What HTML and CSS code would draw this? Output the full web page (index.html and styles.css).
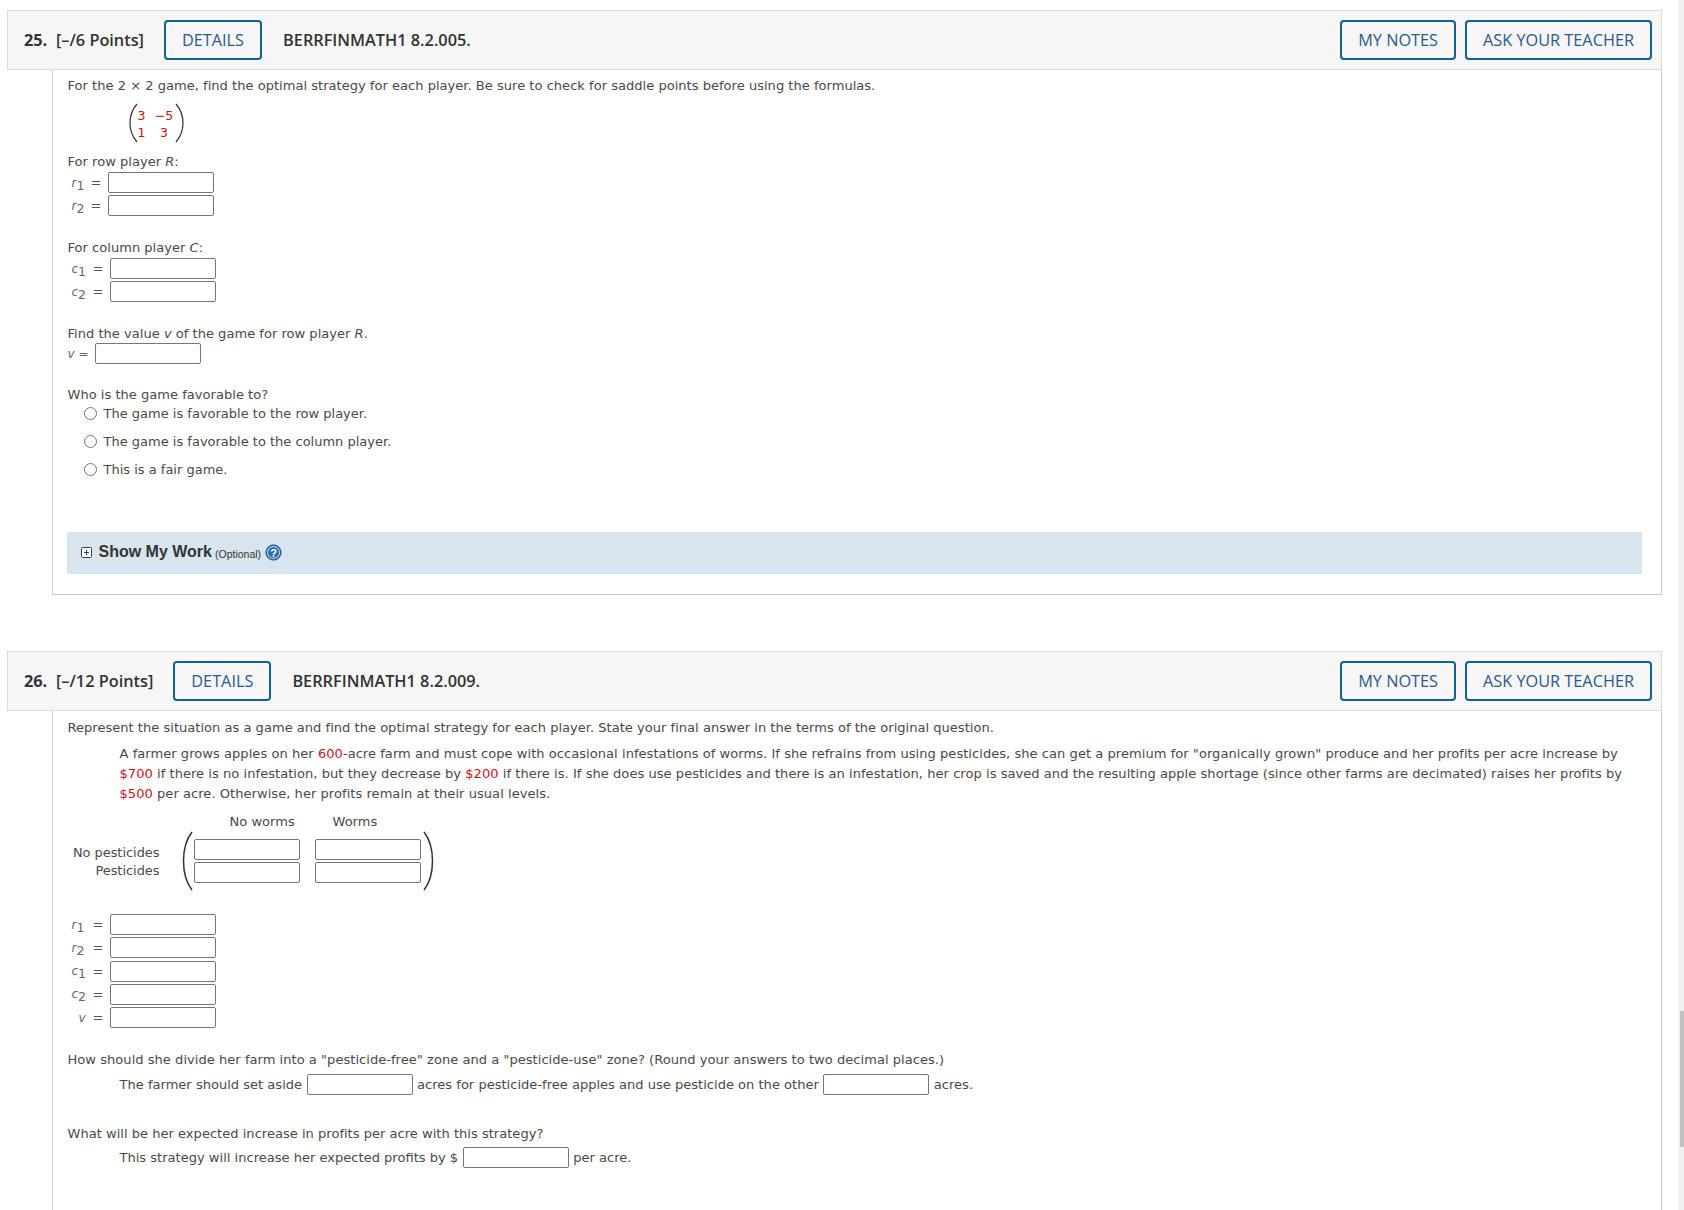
FILE: index.html
```html
<!DOCTYPE html>
<html>
	<head>
		<meta charset="UTF-8">
		<title>Questions 25 and 26</title>
		<link rel="stylesheet" href="styles.css">
	</head>
	<body>
		<!--question 25-->
		<div class="question">
			<div class="qhead">
				<b class="qnum">25.</b>
				<span class="points">[–/6 Points]</span>
				<a class="btn btn-details">DETAILS</a>
				<span class="code">BERRFINMATH1 8.2.005.</span>
				<div class="qtools">
					<a class="btn">MY NOTES</a>
					<a class="btn">ASK YOUR TEACHER</a>
				</div>
			</div>
			<div class="qbody">
				<p class="line first">For the 2 × 2 game, find the optimal strategy for each player. Be sure to check for saddle points before using the formulas.</p>
				<div class="small-matrix">
					<svg class="paren" width="9" height="40" viewBox="0 0 9 40"><path d="M8 1C2 8 1 14 1 20s1 12 7 19" fill="none" stroke="#333" stroke-width="1.2"/></svg>
					<div class="nums">
						<span>3</span><span>−5</span>
						<span>1</span><span>3</span>
					</div>
					<svg class="paren" width="9" height="40" viewBox="0 0 9 40"><path d="M1 1c6 7 7 13 7 19s-1 12-7 19" fill="none" stroke="#333" stroke-width="1.2"/></svg>
				</div>
				<p class="line gap-s">For row player <i>R</i>:</p>
				<div class="answers">
					<label class="ans lbl-r"><span class="var"><i>r</i><sub>1</sub></span><span class="eq">=</span><input type="text"></label>
					<label class="ans lbl-r"><span class="var"><i>r</i><sub>2</sub></span><span class="eq">=</span><input type="text"></label>
				</div>
				<p class="line gap-l">For column player <i>C</i>:</p>
				<div class="answers">
					<label class="ans lbl-c"><span class="var"><i>c</i><sub>1</sub></span><span class="eq">=</span><input type="text"></label>
					<label class="ans lbl-c"><span class="var"><i>c</i><sub>2</sub></span><span class="eq">=</span><input type="text"></label>
				</div>
				<p class="line gap-l">Find the value <i>v</i> of the game for row player <i>R</i>.</p>
				<label class="ans-v"><span class="var"><i>v</i> =</span><input type="text"></label>
				<p class="line gap-who">Who is the game favorable to?</p>
				<div class="choices">
					<label class="choice"><input type="radio" name="fav">The game is favorable to the row player.</label>
					<label class="choice"><input type="radio" name="fav">The game is favorable to the column player.</label>
					<label class="choice"><input type="radio" name="fav">This is a fair game.</label>
				</div>
				<div class="mywork">
					<svg class="plus" width="11" height="11" viewBox="0 0 11 11"><rect x=".5" y=".5" width="10" height="10" rx="1" fill="#fff" stroke="#345"/><path d="M5.500 3v5M3 5.500h5" stroke="#345"/></svg>
					<b>Show My Work</b>
					<small>(Optional)</small>
					<svg class="help" width="17" height="17" viewBox="0 0 17 17"><circle cx="8.500" cy="8.500" r="7.600" fill="#2f6db5" stroke="#1d4f8f"/><circle cx="8.500" cy="8.500" r="6" fill="#2f6db5" stroke="#fff" stroke-width=".8"/><text x="8.500" y="12.500" text-anchor="middle" class="help-mark">?</text></svg>
				</div>
			</div>
		</div>

		<!--question 26-->
		<div class="question question-last">
			<div class="qhead">
				<b class="qnum">26.</b>
				<span class="points">[–/12 Points]</span>
				<a class="btn btn-details">DETAILS</a>
				<span class="code">BERRFINMATH1 8.2.009.</span>
				<div class="qtools">
					<a class="btn">MY NOTES</a>
					<a class="btn">ASK YOUR TEACHER</a>
				</div>
			</div>
			<div class="qbody">
				<p class="line first">Represent the situation as a game and find the optimal strategy for each player. State your final answer in the terms of the original question.</p>
				<p class="story">A farmer grows apples on her <span class="red">600</span>-acre farm and must cope with occasional infestations of worms. If she refrains from using pesticides, she can get a premium for "organically grown" produce and her profits per acre increase by <span class="red">$700</span> if there is no infestation, but they decrease by <span class="red">$200</span> if there is. If she does use pesticides and there is an infestation, her crop is saved and the resulting apple shortage (since other farms are decimated) raises her profits by <span class="red">$500</span> per acre. Otherwise, her profits remain at their usual levels.</p>
				<div class="col-heads">
					<span>No worms</span>
					<span>Worms</span>
				</div>
				<div class="payoff">
					<div class="row-heads">
						<span>No pesticides</span>
						<span>Pesticides</span>
					</div>
					<svg class="bigparen" width="12" height="60" viewBox="0 0 12 60"><path d="M10 1C3 10 1.500 20 1.500 30S3 50 10 59" fill="none" stroke="#333" stroke-width="1.500"/></svg>
					<div class="cells">
						<input type="text"><input type="text">
						<input type="text"><input type="text">
					</div>
					<svg class="bigparen" width="12" height="60" viewBox="0 0 12 60"><path d="M2 1c7 9 8.500 19 8.500 29S9 50 2 59" fill="none" stroke="#333" stroke-width="1.500"/></svg>
				</div>
				<div class="answers answers-five">
					<label class="ans lbl-c"><span class="var"><i>r</i><sub>1</sub></span><span class="eq">=</span><input type="text"></label>
					<label class="ans lbl-c"><span class="var"><i>r</i><sub>2</sub></span><span class="eq">=</span><input type="text"></label>
					<label class="ans lbl-c"><span class="var"><i>c</i><sub>1</sub></span><span class="eq">=</span><input type="text"></label>
					<label class="ans lbl-c"><span class="var"><i>c</i><sub>2</sub></span><span class="eq">=</span><input type="text"></label>
					<label class="ans lbl-c"><span class="var var-mid"><i>v</i></span><span class="eq">=</span><input type="text"></label>
				</div>
				<p class="line gap-m">How should she divide her farm into a "pesticide-free" zone and a "pesticide-use" zone? (Round your answers to two decimal places.)</p>
				<div class="fill">The farmer should set aside <input type="text"> acres for pesticide-free apples and use pesticide on the other <input type="text"> acres.</div>
				<p class="line gap-xl">What will be her expected increase in profits per acre with this strategy?</p>
				<div class="fill">This strategy will increase her expected profits by $ <input type="text"> per acre.</div>
			</div>
		</div>

		<!--scrollbar-->
		<div class="scroll"><div class="thumb"></div></div>
	</body>
</html>
```

FILE: styles.css
```css
html,body{
	height: 1210px;
	overflow: hidden;
}
body{
	box-sizing: border-box;
	margin: 0;
	padding: 10px 22px 0 7px;
	background: white;
	font-family: "DejaVu Sans", Verdana, sans-serif;
	font-size: 13.05px;
	color: #4a4a4a;
}
p{
	margin: 0;
}
input[type=text]{
	box-sizing: border-box;
	width: 106px;
	height: 21px;
	margin: 0;
	padding: 0 4px;
	border: 1px solid #767676;
	border-radius: 2px;
	background: white;
}
.question{
	margin-bottom: 56px;
}
.question-last{
	margin-bottom: 0;
}
.qhead{
	display: flex;
	align-items: center;
	box-sizing: border-box;
	height: 60px;
	padding: 0 9px 0 16px;
	border: 1px solid #ddd;
	background: #f6f6f6;
	font-family: "Open Sans", sans-serif;
	font-size: 16.3px;
	color: #333;
}
.qnum{
	width: 32px;
	font-weight: 700;
}
.points{
	margin-right: 20px;
	font-weight: 600;
}
.code{
	margin-left: 21px;
	font-weight: 600;
}
.btn{
	box-sizing: border-box;
	height: 40px;
	padding: 0 16px;
	border: 2px solid #0e6191;
	border-radius: 4px;
	line-height: 36px;
	font-weight: 500;
	color: #2a5a8c;
	cursor: pointer;
}
.qtools{
	display: flex;
	gap: 9px;
	margin-left: auto;
}
.qbody{
	margin-left: 45px;
	padding: 0 18.500px 20px 14.500px;
	border: 1px solid #ccc;
	border-top: none;
}
.question-last .qbody{
	height: 499px;
	padding-bottom: 0;
	border-bottom: none;
}
.line{
	line-height: 18px;
	letter-spacing: .01px;
}
.first{
	padding-top: 7px;
}
.question-last .first{
	padding-top: 8px;
}
.gap-s{
	margin-top: 10px;
}
.gap-l{
	margin-top: 23px;
}
.gap-who{
	margin-top: 22px;
	line-height: 17px;
}
.gap-m{
	margin-top: 23px;
	letter-spacing: .025px;
}
.gap-xl{
	margin-top: 31px;
	line-height: 16px;
}
.red{
	color: #d0121b;
}
.small-matrix{
	display: flex;
	align-items: center;
	height: 40px;
	margin: 8px 0 0 61px;
}
.nums{
	display: grid;
	grid-template-columns: 8px 19px;
	column-gap: 9px;
	grid-auto-rows: 17.500px;
	justify-items: center;
	align-items: center;
	padding: 1.500px 1px 0 0;
	font-size: 12.500px;
	color: #c81018;
}
.answers{
	display: flex;
	flex-direction: column;
	gap: 2px;
	margin-top: 1px;
}
.ans{
	display: flex;
	align-items: center;
	height: 21px;
	padding-left: 4px;
}
.var{
	color: #666;
	font-size: 12px;
}
.var sub{
	font-size: 12.500px;
	line-height: 0;
	vertical-align: -3px;
}
.lbl-r .var{
	width: 19px;
}
.lbl-c .var{
	width: 21px;
}
.lbl-c .var-mid{
	text-align: center;
}
.eq{
	width: 17.500px;
	color: #555;
}
.ans-v{
	display: flex;
	align-items: center;
	gap: 6.500px;
	height: 21px;
}
.choices{
	display: flex;
	flex-direction: column;
	gap: 8px;
	padding-left: 14px;
	font-size: 13px;
}
.choice{
	display: flex;
	align-items: center;
	box-sizing: border-box;
	height: 20px;
	padding-top: 1px;
}
.choice input{
	width: 13px;
	height: 13px;
	margin: 0 7px 0 2px;
}
.mywork{
	display: flex;
	align-items: center;
	box-sizing: border-box;
	height: 42px;
	margin: 53px 1px 0 -1px;
	padding: 0 0 2px 14px;
	background: #d8e5ee;
	font-family: "Liberation Sans", Arial, sans-serif;
	color: #333;
}
.mywork b{
	margin-left: 7px;
	font-size: 16px;
}
.mywork small{
	margin-left: 3px;
	padding-top: 3px;
	font-size: 10.500px;
}
.help{
	margin-left: 4px;
}
.help-mark{
	font-family: "Liberation Sans", Arial, sans-serif;
	font-size: 11px;
	font-weight: 700;
	fill: white;
}
.story{
	margin: 7px 10px 0 52px;
	line-height: 20px;
	letter-spacing: .035px;
}
.col-heads{
	display: flex;
	margin: 10px 0 0 162px;
	line-height: 16px;
}
.col-heads span:first-child{
	width: 103px;
}
.payoff{
	display: flex;
	align-items: center;
	height: 60px;
	margin-top: 1px;
}
.row-heads{
	display: flex;
	flex-direction: column;
	align-items: flex-end;
	width: 92px;
	padding-top: 2px;
	font-size: 12.900px;
	line-height: 18px;
}
.bigparen{
	margin: 0 -2px 0 0;
	flex: none;
}
.row-heads + .bigparen{
	margin: 0 0 0 22px;
}
.cells{
	display: grid;
	grid-template-columns: 106px 106px;
	column-gap: 15px;
	row-gap: 2px;
	margin-right: 1px;
}
.answers-five{
	margin-top: 23px;
	gap: 2.250px;
}
.fill{
	display: flex;
	align-items: center;
	gap: 4.500px;
	height: 21px;
	margin: 5px 0 0 52px;
	white-space: nowrap;
}
.scroll{
	position: absolute;
	top: 0;
	right: 0;
	width: 6px;
	height: 1210px;
	background: #f0f0f0;
}
.thumb{
	position: absolute;
	top: 1011px;
	right: 0;
	width: 4px;
	height: 136px;
	background: #c1c1c1;
}
```
